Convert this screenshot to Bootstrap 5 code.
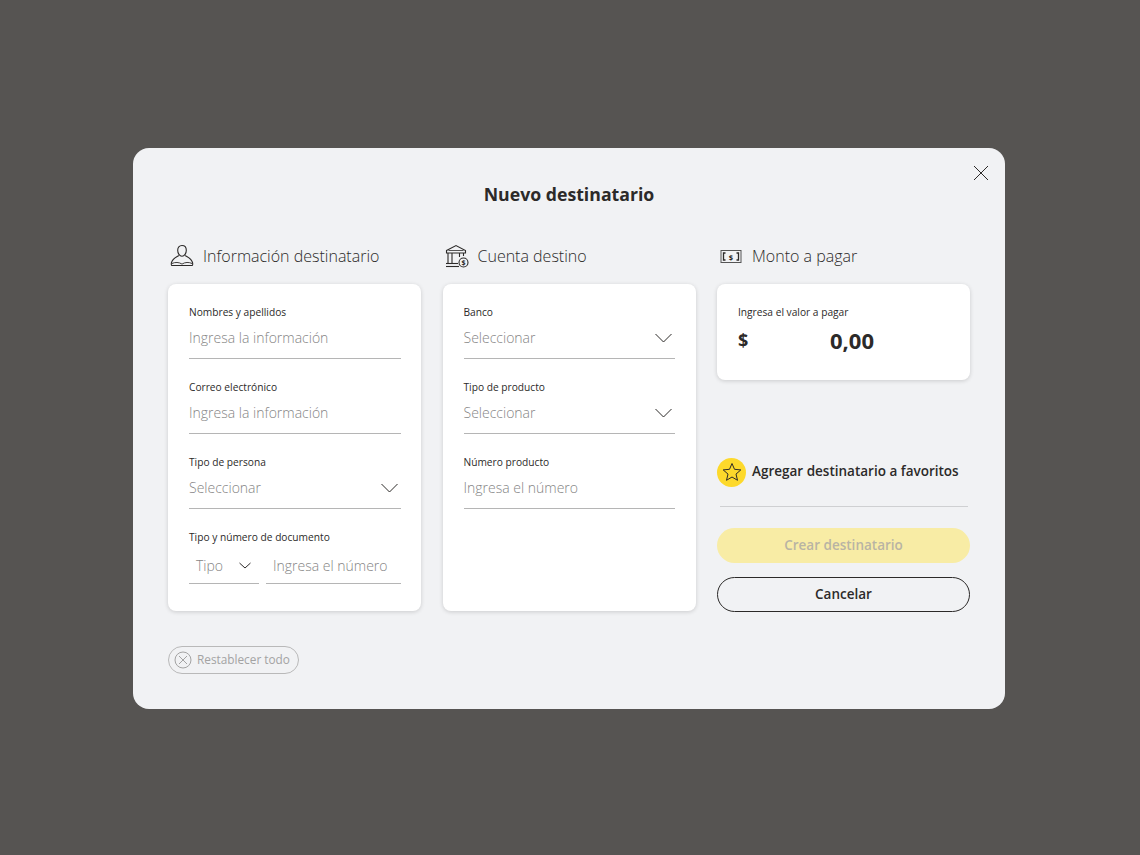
<!DOCTYPE html>
<html lang="es">
<head>
<meta charset="utf-8">
<title>Nuevo destinatario</title>
<link href="https://cdn.jsdelivr.net/npm/bootstrap@5.3.0/dist/css/bootstrap.min.css" rel="stylesheet">
<style>
html,body{height:100%}
body{background:#565452;font-family:"Open Sans",sans-serif;color:#2c2a29;margin:0}
.stage{height:855px;padding-top:148px;padding-left:133px}
.dlg{width:872px;height:561px;background:#f1f2f4;border-radius:16px;padding:0 35px;position:relative}
.closer{position:absolute;top:17px;right:16px;width:16px;height:16px;background:none;border:0;padding:0;line-height:0}
.dlg-title{font-size:17.7px;font-weight:700;text-align:center;margin:0;padding-top:32px;line-height:28px;height:84px;color:#2c2a29}
.cols{display:grid;grid-template-columns:253px 253px 253px;column-gap:21.5px}
.col-head{height:52px;display:flex;align-items:center;gap:9px;font-size:16px;font-weight:300;color:#2c2a29;padding-left:2px;padding-bottom:4px}
.col-head span{line-height:24px}
.pane{background:#fff;border-radius:8px;box-shadow:0 1px 4px rgba(0,0,0,.16);padding:21px 20.500px 21px 21px}
.pane-tall{height:327px}
.pane-short{height:96px}
.fld{height:75px}
.fld-label{font-size:10.2px;line-height:14px;color:#2c2a29;margin:0}
.fld-line{height:40px;border-bottom:1px solid #b5b5b5;display:flex;align-items:center;justify-content:space-between;padding-right:3px;padding-bottom:2px}
.ph{font-size:14px;color:#858585;font-weight:300}
.doc-row{display:flex;gap:7px}
.doc-type,.doc-num{height:39.5px;border-bottom:1px solid #b5b5b5;display:flex;align-items:center;padding-top:5px}
.doc-type{width:70px;justify-content:space-between;padding-left:7px;padding-right:8px}
.doc-num{flex:1;padding-left:7px}
.amount-label{font-size:10.2px;line-height:14px;color:#2c2a29;margin:0}
.amount-row{display:flex;align-items:center;margin-top:6px;height:30px}
.amount-sign{font-size:18px;font-weight:700;width:92px}
.amount-val{font-size:22px;font-weight:700;color:#2c2a29}
.fav{display:flex;align-items:center;gap:6px;margin-top:77px;height:30px;font-size:13.5px;font-weight:600;color:#2c2a29}
.fav-dot{width:29px;height:29px;background:#fdd92b;border-radius:50%;display:flex;align-items:center;justify-content:center}
.fav span:last-child{padding-bottom:1px}
.sep{border-top:1px solid #cfd0d2;margin:19px 2px 21px 3px}
.btn-make,.btn-cancel{display:block;width:100%;border-radius:18px;height:35px;font-size:13.5px;font-weight:600;padding:0;text-align:center;line-height:33px}
.btn-make{background:#f8eca5;border:0;color:#b8b4a4;line-height:35px}
.btn-cancel{background:transparent;border:1px solid #2c2a29;color:#2c2a29;margin-top:14px;line-height:33px}
.reset{margin-top:34px;display:inline-flex;align-items:center;gap:5px;height:28px;border:1px solid #b9b9b9;border-radius:14px;background:transparent;padding:0 8px 0 5px;font-size:11.8px;color:#a3a3a3;font-weight:400}
</style>
</head>
<body>
<div class="stage">
<div class="dlg">
  <button class="closer" type="button" aria-label="Cerrar">
    <svg width="16" height="16" viewBox="0 0 16 16" fill="none" stroke="#2c2a29" stroke-width="1"><path d="M1 1l14 14M15 1L1 15"/></svg>
  </button>
  <h1 class="dlg-title">Nuevo destinatario</h1>
  <div class="cols">
    <div>
      <div class="col-head">
        <svg width="24" height="24" viewBox="0 0 24 24" fill="none" stroke="#2c2a29" stroke-width="1.1"><path d="M12 1.500c2.800 0 4.300 2 4.300 4.800 0 3-1.800 6-4.300 6s-4.300-3-4.300-6c0-2.800 1.500-4.800 4.300-4.800z"/><path d="M8.800 11.500C5.500 13.500 2.500 14.500 1.500 18.500c-.3 1.200-.4 3 .5 3h20c.9 0 .8-1.800.5-3-1-4-4-5-7.300-7"/><path d="M2 19.500c3-1.500 7-1.500 10 .6 3-2.100 7-2.100 10-.6" stroke-width=".9"/></svg>
        <span>Información destinatario</span>
      </div>
      <div class="pane pane-tall">
        <div class="fld">
          <p class="fld-label">Nombres y apellidos</p>
          <div class="fld-line"><span class="ph">Ingresa la información</span></div>
        </div>
        <div class="fld">
          <p class="fld-label">Correo electrónico</p>
          <div class="fld-line"><span class="ph">Ingresa la información</span></div>
        </div>
        <div class="fld">
          <p class="fld-label">Tipo de persona</p>
          <div class="fld-line"><span class="ph">Seleccionar</span>
            <svg width="17" height="10" viewBox="0 0 17 10" fill="none" stroke="#2c2a29" stroke-width="1"><path d="M.5 1l8 8 8-8"/></svg></div>
        </div>
        <div class="fld">
          <p class="fld-label">Tipo y número de documento</p>
          <div class="doc-row">
            <div class="doc-type"><span class="ph">Tipo</span>
              <svg width="12" height="7" viewBox="0 0 12 7" fill="none" stroke="#2c2a29" stroke-width="1"><path d="M.5 1l5.500 5 5.500-5"/></svg></div>
            <div class="doc-num"><span class="ph">Ingresa el número</span></div>
          </div>
        </div>
      </div>
    </div>
    <div>
      <div class="col-head">
        <svg width="24" height="24" viewBox="0 0 24 24" fill="none" stroke="#2c2a29" stroke-width="1.1"><path d="M1.500 6.500L11 1.500l9.500 5v2.500h-19z"/><path d="M3.500 6.500h15" stroke-width=".8"/><path d="M3 9v10.500M7 9v10.500M14.500 9v4M18.500 9v3"/><path d="M1 19.500h12"/><path d="M1 22.500h13"/><circle cx="18.500" cy="18.500" r="4.500" fill="#f1f2f4"/><text x="18.500" y="21" font-size="7" font-weight="700" text-anchor="middle" fill="#2c2a29" stroke="none" font-family="Open Sans">$</text></svg>
        <span>Cuenta destino</span>
      </div>
      <div class="pane pane-tall">
        <div class="fld">
          <p class="fld-label">Banco</p>
          <div class="fld-line"><span class="ph">Seleccionar</span>
            <svg width="17" height="10" viewBox="0 0 17 10" fill="none" stroke="#2c2a29" stroke-width="1"><path d="M.5 1l8 8 8-8"/></svg></div>
        </div>
        <div class="fld">
          <p class="fld-label">Tipo de producto</p>
          <div class="fld-line"><span class="ph">Seleccionar</span>
            <svg width="17" height="10" viewBox="0 0 17 10" fill="none" stroke="#2c2a29" stroke-width="1"><path d="M.5 1l8 8 8-8"/></svg></div>
        </div>
        <div class="fld">
          <p class="fld-label">Número producto</p>
          <div class="fld-line"><span class="ph">Ingresa el número</span></div>
        </div>
      </div>
    </div>
    <div>
      <div class="col-head">
        <svg width="24" height="24" viewBox="0 0 24 24" fill="none" stroke="#2c2a29" stroke-width="1"><rect x="2" y="6.500" width="20" height="12" stroke="#555"/><path d="M6.500 9H4.500v7h2M17.500 9h2v7h-2" stroke-width="1.300"/><text x="12" y="15.500" font-size="7.500" font-weight="700" text-anchor="middle" fill="#2c2a29" stroke="none" font-family="Open Sans">$</text></svg>
        <span>Monto a pagar</span>
      </div>
      <div class="pane pane-short">
        <p class="amount-label">Ingresa el valor a pagar</p>
        <div class="amount-row"><span class="amount-sign">$</span><span class="amount-val">0,00</span></div>
      </div>
      <div class="fav">
        <span class="fav-dot"><svg width="20" height="20" viewBox="0 0 20 20" fill="none" stroke="#2c2a29" stroke-width="1" stroke-linejoin="round"><path d="M10 1.500l2.500 5.800 6.300.6-4.800 4.200 1.500 6.200L10 15l-5.500 3.300L6 12.100 1.200 7.900l6.300-.6z"/></svg></span>
        <span>Agregar destinatario a favoritos</span>
      </div>
      <div class="sep"></div>
      <button class="btn-make" type="button">Crear destinatario</button>
      <button class="btn-cancel" type="button">Cancelar</button>
    </div>
  </div>
  <button class="reset" type="button">
    <svg width="18" height="18" viewBox="0 0 18 18" fill="none" stroke="#a3a3a3" stroke-width="1"><circle cx="9" cy="9" r="8"/><path d="M5 5l8 8M13 5l-8 8"/></svg>
    Restablecer todo
  </button>
</div>
</div>
<script src="https://cdn.jsdelivr.net/npm/bootstrap@5.3.0/dist/js/bootstrap.bundle.min.js"></script>
</body>
</html>
